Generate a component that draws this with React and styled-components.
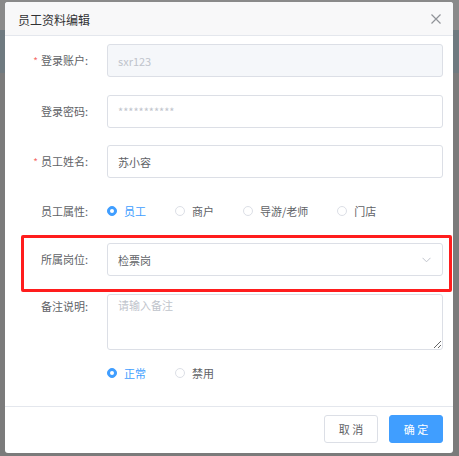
import React, { useState } from 'react';
import styled, { createGlobalStyle } from 'styled-components';

const GlobalStyle = createGlobalStyle`
  html, body {
    margin: 0;
    padding: 0;
  }
  body {
    width: 459px;
    height: 456px;
    overflow: hidden;
    font-family: "Noto Sans CJK SC", "Noto Sans", sans-serif;
    background: linear-gradient(
      to bottom,
      #8a8a8a 0px, #8a8a8a 30px,
      #6f7a80 30px, #6f7a80 73px,
      #7b7b7b 73px
    );
  }
`;

const Page = styled.div`
  padding: 2px 6px 0 5px;
`;

const Modal = styled.div`
  width: 448px;
  height: 451px;
  background: #fff;
  border-radius: 3px;
  display: flex;
  flex-direction: column;
  overflow: hidden;
`;

const Header = styled.div`
  height: 33px;
  display: flex;
  align-items: center;
  justify-content: space-between;
  padding: 0 12px 0 13px;
  background: #f8f8f9;
  border-bottom: 1px solid #e4e7ed;
`;

const Title = styled.span`
  font-size: 12px;
  color: #303133;
  margin-top: 2px;
`;

const CloseButton = styled.button`
  border: none;
  background: none;
  padding: 0;
  width: 10px;
  height: 10px;
  display: flex;
  cursor: pointer;
`;

const Body = styled.div`
  flex: 1;
  padding: 8px 10px 0 0;
`;

const FormRow = styled.div`
  position: relative;
  display: flex;
  align-items: ${p => (p.$top ? 'flex-start' : 'center')};
  height: ${p => p.$h || 33}px;
  margin-bottom: ${p => (p.$mb === undefined ? 17.5 : p.$mb)}px;
`;

const Label = styled.label`
  width: 102px;
  flex-shrink: 0;
  box-sizing: border-box;
  padding-right: 19px;
  text-align: right;
  font-size: 11px;
  color: #606266;
  line-height: ${p => p.$lh || 32}px;
  align-self: flex-start;
`;

const Required = styled.span`
  color: #f56c6c;
  margin-right: 3px;
  font-size: 10px;
`;

const Input = styled.input`
  flex: 1;
  height: 33px;
  box-sizing: border-box;
  border: 1px solid #dcdfe6;
  border-radius: 3px;
  padding: 0 10px;
  font-size: 11px;
  font-family: inherit;
  color: #606266;
  background: ${p => (p.disabled ? '#f5f7fa' : '#fff')};
  outline: none;

  &:disabled {
    color: #c0c4cc;
  }
  &::placeholder {
    color: #c0c4cc;
  }
`;

const SelectBox = styled.div`
  flex: 1;
  height: 33px;
  box-sizing: border-box;
  border: 1px solid #dcdfe6;
  border-radius: 3px;
  padding: 0 11px 0 10px;
  display: flex;
  align-items: center;
  justify-content: space-between;
  font-size: 11px;
  color: #606266;
`;

const TextArea = styled.textarea`
  flex: 1;
  height: 56px;
  box-sizing: border-box;
  border: 1px solid #dcdfe6;
  border-radius: 3px;
  padding: 2px 10px;
  font-size: 11px;
  line-height: 16px;
  font-family: inherit;
  color: #606266;
  outline: none;

  &::placeholder {
    color: #c0c4cc;
  }
`;

const Highlight = styled.div`
  position: absolute;
  left: 16px;
  right: -9px;
  top: -8px;
  bottom: -16px;
  border: 3px solid #ff1d1d;
  border-radius: 2px;
  pointer-events: none;
`;

const RadioGroup = styled.div`
  display: flex;
  align-items: center;
  margin-left: ${p => (p.$indent ? '102px' : '0')};
`;

const RadioItem = styled.label`
  display: flex;
  align-items: center;
  margin-right: 29px;
  font-size: 11px;
  color: ${p => (p.$checked ? '#409eff' : '#606266')};
  cursor: pointer;
`;

const RadioDot = styled.span`
  width: 10px;
  height: 10px;
  box-sizing: border-box;
  border-radius: 50%;
  border: 1px solid ${p => (p.$checked ? '#409eff' : '#dcdfe6')};
  background: ${p => (p.$checked ? '#409eff' : '#fff')};
  margin-right: 7px;
  display: flex;
  align-items: center;
  justify-content: center;

  &::after {
    content: '';
    width: 4px;
    height: 4px;
    border-radius: 50%;
    background: #fff;
    display: ${p => (p.$checked ? 'block' : 'none')};
  }
`;

const Footer = styled.div`
  border-top: 1px solid #e4e7ed;
  padding: 8px 10px 10px;
  display: flex;
  justify-content: flex-end;
  gap: 11px;
`;

const Button = styled.button`
  width: 54px;
  height: 28px;
  border-radius: 3px;
  font-size: 11px;
  font-family: inherit;
  cursor: pointer;
  border: 1px solid ${p => (p.$primary ? '#409eff' : '#dcdfe6')};
  background: ${p => (p.$primary ? '#409eff' : '#fff')};
  color: ${p => (p.$primary ? '#fff' : '#606266')};
  padding: 0;
`;

function Radio({ label, checked, onClick }) {
  return (
    <RadioItem $checked={checked} onClick={onClick}>
      <RadioDot $checked={checked} />
      {label}
    </RadioItem>
  );
}

const types = ['员工', '商户', '导游/老师', '门店'];

export default function App() {
  const [type, setType] = useState('员工');
  const [status, setStatus] = useState('正常');

  return (
    <Page>
      <GlobalStyle />
      <Modal>
        <Header>
          <Title>员工资料编辑</Title>
          <CloseButton aria-label="close">
            <svg width="10" height="10" viewBox="0 0 10 10">
              <path d="M0.5 0.5 L9.5 9.5 M9.5 0.5 L0.5 9.5" stroke="#909399" strokeWidth="1.2" />
            </svg>
          </CloseButton>
        </Header>
        <Body>
          <FormRow>
            <Label><Required>*</Required>登录账户:</Label>
            <Input disabled value="sxr123" readOnly />
          </FormRow>
          <FormRow>
            <Label>登录密码:</Label>
            <Input placeholder="***********" />
          </FormRow>
          <FormRow>
            <Label><Required>*</Required>员工姓名:</Label>
            <Input defaultValue="苏小容" />
          </FormRow>
          <FormRow $h={30}>
            <Label $lh={30}>员工属性:</Label>
            <RadioGroup>
              {types.map(t => (
                <Radio key={t} label={t} checked={type === t} onClick={() => setType(t)} />
              ))}
            </RadioGroup>
          </FormRow>
          <FormRow>
            <Highlight />
            <Label>所属岗位:</Label>
            <SelectBox>
              <span>检票岗</span>
              <svg width="9" height="6" viewBox="0 0 9 6">
                <path d="M0.5 0.8 L4.5 4.8 L8.5 0.8" fill="none" stroke="#c0c4cc" strokeWidth="1" />
              </svg>
            </SelectBox>
          </FormRow>
          <FormRow $h={56} $top>
            <Label $lh={24}>备注说明:</Label>
            <TextArea placeholder="请输入备注" />
          </FormRow>
          <FormRow $h={12} $mb={0}>
            <RadioGroup $indent>
              {['正常', '禁用'].map(s => (
                <Radio key={s} label={s} checked={status === s} onClick={() => setStatus(s)} />
              ))}
            </RadioGroup>
          </FormRow>
        </Body>
        <Footer>
          <Button>取 消</Button>
          <Button $primary>确 定</Button>
        </Footer>
      </Modal>
    </Page>
  );
}
